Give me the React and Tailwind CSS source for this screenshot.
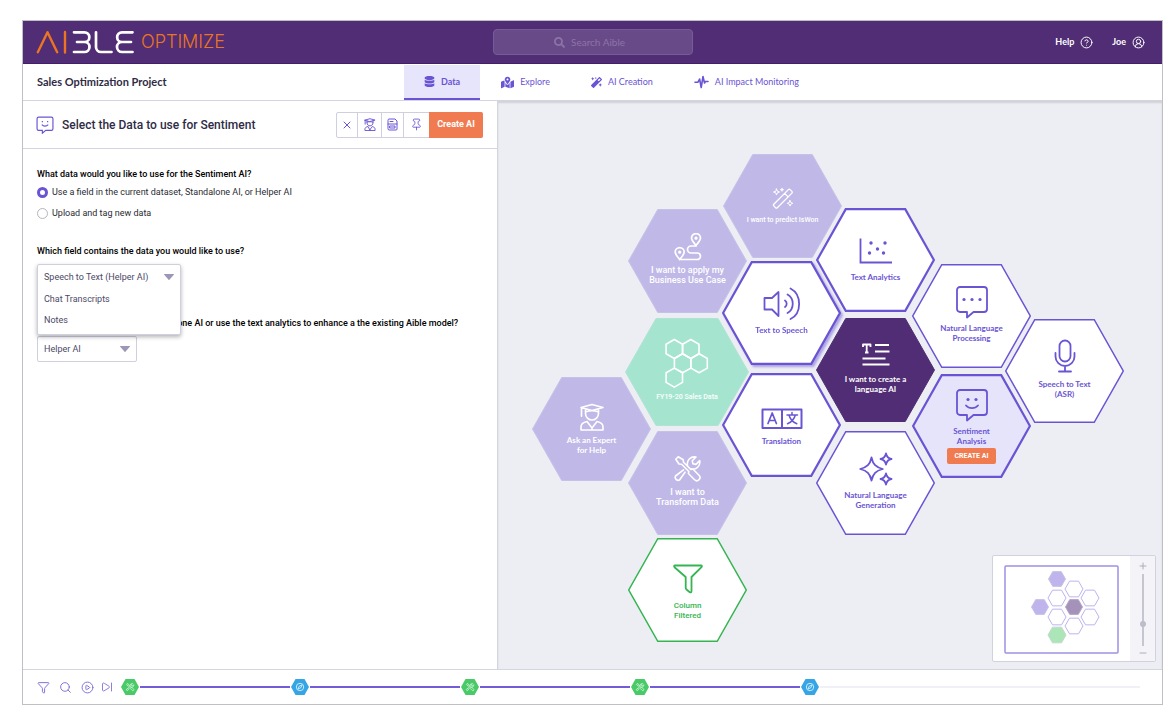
import React from "react";
import { CirclePlay, CircleQuestionMark, CircleUserRound, Funnel, Pin, Search, SkipForward, X } from "lucide-react";
import { FaDatabase, FaMagic, FaMapMarkedAlt, FaSearch } from "react-icons/fa";

function Icon({ w, h, sw = 2, children }) {
  return (
    <svg
      width={w}
      height={h}
      viewBox={`0 0 ${w} ${h}`}
      fill="none"
      stroke="currentColor"
      strokeWidth={sw}
      strokeLinecap="round"
      strokeLinejoin="round"
      aria-hidden="true"
      className="block shrink-0"
    >
      {children}
    </svg>
  );
}

const WandIcon = () => (
  <Icon w={22} h={22} sw={1.3}>
    <path d="M1.8 17.2 16.4 2.6a1.2 1.2 0 0 1 1.7 0l1.8 1.8a1.2 1.2 0 0 1 0 1.7L5.3 20.7a1.2 1.2 0 0 1-1.7 0l-1.8-1.8a1.2 1.2 0 0 1 0-1.7zM12.6 6.4l3.5 3.5" />
    <path d="M4.5 2l.8 2.2 2.2.8-2.2.8-.8 2.2-.8-2.2L1.500 5l2.200-.8zM18 13.500l.8 2 2 .8-2 .8-.8 2-.8-2-2-.8 2-.8z" strokeWidth="1" />
    <path d="M10 1.500v2.400M8.800 2.700h2.400" />
  </Icon>
);

const RouteIcon = () => (
  <Icon w={28} h={28} sw={1.7}>
    <path d="M22 12.500c-2.500-3-4.500-5.200-4.500-7.400a4.500 4.500 0 0 1 9 0c0 2.200-2 4.400-4.500 7.400zM5.700 26.500c-2.500-3-4.500-5.200-4.500-7.400a4.500 4.500 0 0 1 9 0c0 2.200-2 4.400-4.500 7.400z" />
    <path d="M5.700 26.500h17.500a3.200 3.200 0 0 0 0-6.500H17a3.500 3.500 0 0 1 0-7h5" />
    <circle cx="22" cy="5.200" r=".8" />
    <circle cx="5.700" cy="19.200" r=".8" />
  </Icon>
);

const ScatterIcon = () => (
  <Icon w={33} h={26} sw={1.8}>
    <path d="M1.500 1.500v23h31" strokeLinecap="square" strokeLinejoin="miter" />
    <g fill="currentColor" stroke="none">
      <circle cx="12" cy="5" r="1.700" />
      <circle cx="26" cy="5" r="1.700" />
      <circle cx="18.500" cy="11" r="1.700" />
      <circle cx="10.500" cy="15" r="1.700" />
      <circle cx="24.500" cy="15" r="1.700" />
    </g>
  </Icon>
);

const SpeakerIcon = () => (
  <Icon w={38} h={34} sw={1.8}>
    <path d="M1.500 11h7.500L15.500 5v24L9 22.500H1.500z" />
    <path d="M22 13.500a4 4 0 0 1 0 6.500M24.500 7.500c7 4 7 14.500 0 18.500M27.500 1.500c11.500 6 11.500 25 0 30.500" />
  </Icon>
);

function BubbleIcon({ children }) {
  return (
    <Icon w={34} h={34} sw={1.800}>
      <path d="M5 2h24a3 3 0 0 1 3 3v19a3 3 0 0 1-3 3H18.500L12 32.500V27H5a3 3 0 0 1-3-3V5a3 3 0 0 1 3-3z" />
      {children}
    </Icon>
  );
}

const ChatIcon = () => (
  <BubbleIcon>
    <g fill="currentColor" stroke="none">
      <circle cx="9" cy="14.500" r="1.600" />
      <circle cx="17" cy="14.500" r="1.600" />
      <circle cx="25" cy="14.500" r="1.600" />
    </g>
  </BubbleIcon>
);

const SmileIcon = () => (
  <BubbleIcon>
    <g fill="currentColor" stroke="none">
      <circle cx="13" cy="11.500" r="1.600" />
      <circle cx="21" cy="11.500" r="1.600" />
    </g>
    <path d="M11 17.500c3 3.500 9 3.500 12 0" />
  </BubbleIcon>
);

const MicIcon = () => (
  <Icon w={22} h={34} sw={1.800}>
    <rect x="5.500" y="1.500" width="11" height="21" rx="5.500" />
    <path d="M1.500 14v3.500a9.500 9.500 0 0 0 19 0V14M11 27v5.500M5 32.500h12" />
  </Icon>
);

const ArticleIcon = () => (
  <Icon w={30} h={24} sw={1.800}>
    <path d="M2 5V2.500h7.500V5M5.700 2.500v8M4 10.500h3.500M14 3h14M14 9.500h14.500M1.500 16.500h23M1.500 22.500h27" strokeLinecap="butt" />
  </Icon>
);

const TranslateIcon = () => (
  <Icon w={42} h={22} sw={1.700}>
    <path d="M1.500 1.500h39v18.500h-39zM21 1.500V20" strokeWidth="2" />
    <path d="M7 15.500 11.200 5l4.200 10.500M8.500 12.500h5.500" />
    <path d="M26 7h10.500M31 4.500V7M34.300 7c-1 4.200-4.300 7.300-7.800 8.800M28 7c1 4.200 4.300 7.300 7.800 8.800" strokeWidth="1.500" />
  </Icon>
);

const SparklesIcon = () => (
  <Icon w={34} h={34} sw={1.800}>
    <path d="M12.500 5.500c1.500 7 4.300 9.800 11.300 11.500-7 1.700-9.800 4.500-11.300 11.500C11 21.500 8.200 18.700 1.200 17c7-1.700 9.800-4.500 11.300-11.500z" />
    <path d="M27 1.500c.7 3.500 2 4.800 5.500 5.500-3.500.7-4.800 2-5.500 5.500-.7-3.500-2-4.800-5.500-5.500 3.500-.7 4.800-2 5.500-5.500zM27 21.500c.7 3.500 2 4.800 5.500 5.500-3.500.7-4.800 2-5.500 5.500-.7-3.500-2-4.800-5.500-5.500 3.500-.7 4.800-2 5.500-5.500z" />
  </Icon>
);

const cells = [
  [9.3, 11],
  [25.8, 11],
  [17.6, 25.3],
  [34.1, 25.3],
  [9.3, 39.6],
];

const HiveIcon = () => (
  <Icon w={44} h={50} sw={1.600}>
    {cells.map(([x, y]) => (
      <polygon
        key={`${x}-${y}`}
        points={`${x},${y - 9.5} ${x + 8.2},${y - 4.8} ${x + 8.2},${y + 4.8} ${x},${y + 9.5} ${x - 8.2},${y + 4.8} ${x - 8.2},${y - 4.8}`}
      />
    ))}
  </Icon>
);

const ExpertIcon = ({ w = 26, h = 28, sw = 1.600 }) => (
  <svg width={w} height={h} viewBox="0 0 26 28" fill="none" stroke="currentColor" strokeWidth={sw} strokeLinecap="round" strokeLinejoin="round" aria-hidden="true" className="shrink-0">
    <path d="M2 4.500 13 1.500l11 3-11 3zM6.500 6v4.500c0 3.500 3 6.500 6.500 6.500s6.500-3 6.500-6.500V6M6.500 9c4-1.500 9-1.500 13 0M2.500 4.800v8.500" />
    <path d="M8 18.500c-3.500.7-6 2.500-6 5.500v3h22v-3c0-3-2.500-4.800-6-5.500L13 25zM13 25v2" />
  </svg>
);

const ToolsPath = () => (
  <>
    <path d="M1.800 4.200 4.200 1.800l5 3 .3 2.400 7.300 7.200 2-.4 6.200 6.300a3 3 0 0 1-4.400 4.400l-6.200-6.200.4-2-7.200-7.300-2.600-.2z" />
    <path d="M11 17.200 5.500 25a3 3 0 0 1-4-4l8-6.200M13.500 10.500c-1-5 3-9.500 8.500-8.500l-3.700 3.800.6 3 3 .6 3.800-3.800c1 5.500-3.500 9.500-8.500 8.500" />
  </>
);

const ToolsIcon = () => (
  <Icon w={28} h={28} sw={1.600}>
    <ToolsPath />
  </Icon>
);

const FunnelIcon = () => (
  <Icon w={32} h={32} sw={1.800}>
    <path d="M3 2.500h26c1 0 1.200 1 .5 1.700L19.500 14v14c0 1.500-1 1.700-2 1l-3-2.500c-.6-.5-.8-1-.8-1.700V14L2.500 4.200C1.800 3.500 2 2.500 3 2.500z" />
  </Icon>
);

const PulseIcon = () => (
  <Icon w={15} h={14} sw={1.600}>
    <path d="M1 7.200h3L5.600 4 7.200 12.500 9 1.500l1.500 6.500.8-1.500H14" />
  </Icon>
);

const DocIcon = () => (
  <Icon w={11} h={13} sw={1}>
    <path d="M1 2a1 1 0 0 1 1-1h6l2 2v8a1 1 0 0 1-1 1H2a1 1 0 0 1-1-1zM1 6h9M3 3.500h3M3 8h5v2H3z" />
  </Icon>
);

const PURPLE = "#6a54d4";

function Hex({ w, h, fill, stroke, sw }) {
  const i = sw / 2;
  return (
    <svg className="absolute inset-0" width={w} height={h} aria-hidden="true">
      <polygon
        points={`${w / 4},${i} ${(w * 3) / 4},${i} ${w - i},${h / 2} ${(w * 3) / 4},${h - i} ${w / 4},${h - i} ${i},${h / 2}`}
        fill={fill}
        stroke={stroke}
        strokeWidth={sw}
      />
    </svg>
  );
}

const lilac = { fill: "#c0b9e8", stroke: "#c6c1e8", sw: 1 };
const open = { fill: "#ffffff", stroke: PURPLE, sw: 1.500 };
const bold = { fill: "#ffffff", stroke: PURPLE, sw: 2.200 };

const nodes = [
  { pos: "left-[225px] top-[53px]", look: lilac, fit: "gap-1.5", tone: "text-white font-[Roboto] font-medium text-[7px]", icon: <WandIcon />, lines: ["I want to predict IsWon"] },
  { pos: "left-[130px] top-[108px]", look: lilac, fit: "gap-1 pb-1", tone: "text-white font-[Roboto] font-medium text-[9px]", icon: <RouteIcon />, lines: ["I want to apply my", "Business Use Case"] },
  { pos: "left-[318px] top-[107px]", look: bold, fit: "gap-2", tone: "text-[#6a54d4] font-[Lato] font-bold text-[8px]", icon: <ScatterIcon />, lines: ["Text Analytics"] },
  { pos: "left-[224px] top-[160px] drop-shadow-[2px_2px_1px_rgba(106,84,212,0.5)]", look: bold, fit: "gap-1 pb-1", tone: "text-[#6a54d4] font-[Lato] font-bold text-[8px]", icon: <SpeakerIcon />, lines: ["Text to Speech"] },
  { pos: "left-[414px] top-[163px]", look: open, fit: "gap-1 pb-1", tone: "text-[#6a54d4] font-[Lato] font-bold text-[8px]", icon: <ChatIcon />, lines: ["Natural Language", "Processing"] },
  { pos: "left-[507px] top-[218px]", look: open, fit: "gap-1.5 pb-1", tone: "text-[#6a54d4] font-[Lato] font-bold text-[8px]", icon: <MicIcon />, lines: ["Speech to Text", "(ASR)"] },
  { pos: "left-[318px] top-[217px]", look: { fill: "#502d74", stroke: "#502d74", sw: 1 }, fit: "gap-2 pb-1", tone: "text-white font-[Lato] font-bold text-[8px]", icon: <ArticleIcon />, lines: ["I want to create a", "language AI"] },
  { pos: "left-[414px] top-[273px]", look: { fill: "#e5e4fb", stroke: PURPLE, sw: 2.200 }, fit: "gap-1", tone: "text-[#6a54d4] font-[Lato] font-bold text-[8px]", icon: <SmileIcon />, lines: ["Sentiment", "Analysis"], action: "CREATE AI" },
  { pos: "left-[224px] top-[272px]", look: bold, fit: "gap-1.5 pt-1", tone: "text-[#6a54d4] font-[Lato] font-bold text-[8px]", icon: <TranslateIcon />, lines: ["Translation"] },
  { pos: "left-[318px] top-[330px]", look: open, fit: "gap-1 pb-1", tone: "text-[#6a54d4] font-[Lato] font-bold text-[8px]", icon: <SparklesIcon />, lines: ["Natural Language", "Generation"] },
  { pos: "left-[127px] top-[217px]", big: true, look: { fill: "#a5e5d0", stroke: "#b0e3d4", sw: 1 }, fit: "gap-1 pb-1", tone: "text-white font-[Roboto] font-medium text-[7px]", icon: <HiveIcon />, lines: ["FY19-20 Sales Data"] },
  { pos: "left-[34px] top-[276px]", look: lilac, fit: "gap-1", tone: "text-white font-[Lato] font-bold text-[8px]", icon: <ExpertIcon />, lines: ["Ask an Expert", "for Help"] },
  { pos: "left-[130px] top-[330px]", look: lilac, fit: "gap-1 pb-1", tone: "text-white font-[Roboto] font-medium text-[9px]", icon: <ToolsIcon />, lines: ["I want to", "Transform Data"] },
  { pos: "left-[130px] top-[437px]", look: { fill: "#ffffff", stroke: "#35b552", sw: 1.500 }, fit: "gap-1.5 pt-1", tone: "text-[#35b552] font-[Roboto] font-medium text-[8px]", icon: <FunnelIcon />, lines: ["Column", "Filtered"] },
];

function Node({ node }) {
  const size = node.big ? "h-[108px] w-[124px]" : "h-[104px] w-[119px]";
  return (
    <div className={`absolute ${node.pos} ${size}`}>
      <Hex w={node.big ? 124 : 119} h={node.big ? 108 : 104} {...node.look} />
      <div className={`relative flex h-full flex-col items-center justify-center text-center leading-[10px] ${node.fit} ${node.tone}`}>
        {node.icon}
        <div>
          {node.lines.map((line) => (
            <div key={line} className="whitespace-nowrap">{line}</div>
          ))}
          {node.action && (
            <button type="button" className="mt-0.5 block h-4 w-[49px] rounded-xs bg-[#f07b51] font-[Roboto] text-[7px] font-bold text-white">
              {node.action}
            </button>
          )}
        </div>
      </div>
    </div>
  );
}

function MiniHex({ x, y, fill = "#fff", stroke = "#beb3ee", r = 9 }) {
  const h = r * 0.870;
  return (
    <polygon
      points={`${x - r},${y} ${x - r / 2},${y - h} ${x + r / 2},${y - h} ${x + r},${y} ${x + r / 2},${y + h} ${x - r / 2},${y + h}`}
      fill={fill}
      stroke={stroke}
    />
  );
}

function MiniMap() {
  return (
    <div className="absolute right-1.5 bottom-[7px] flex h-[107px] w-[164px] overflow-hidden rounded-xs border border-[#d2d2de] bg-white">
      <div className="flex flex-1 items-center justify-center pt-0.5">
        <svg width="115" height="89" aria-label="Map overview">
          <rect x="1" y="1" width="113" height="87" rx="1" fill="#fff" stroke="#9f91e4" strokeWidth="1.500" />
          <MiniHex x={53} y={14} r={8.500} fill="#bfb4ec" stroke="#c9c3e6" />
          <MiniHex x={36} y={42} r={8.500} fill="#bfb4ec" stroke="#c9c3e6" />
          <MiniHex x={70} y={24} />
          <MiniHex x={53} y={33} />
          <MiniHex x={86} y={33} />
          <MiniHex x={53} y={52} />
          <MiniHex x={86} y={52} />
          <MiniHex x={70} y={61} />
          <MiniHex x={70} y={42} r={8.500} fill="#a592ba" stroke="#b5a8c6" />
          <MiniHex x={53} y={70} fill="#abe5b8" stroke="#c3d9cb" />
        </svg>
      </div>
      <div className="flex w-[25px] flex-col items-center justify-between bg-[#f3f3f8] pt-1.5 pb-1 text-[#aeaebd]">
        <button type="button" aria-label="Zoom in">
          <Icon w={8} h={8} sw={1}><path d="M4 1v6M1 4h6" /></Icon>
        </button>
        <input
          type="range"
          aria-label="Zoom level"
          defaultValue="28"
          className="h-[72px] w-2 appearance-none bg-transparent [direction:rtl] [writing-mode:vertical-lr] [&::-webkit-slider-runnable-track]:w-0.5 [&::-webkit-slider-runnable-track]:bg-[#c6c6d2] [&::-webkit-slider-thumb]:-ml-0.5 [&::-webkit-slider-thumb]:size-1.5 [&::-webkit-slider-thumb]:appearance-none [&::-webkit-slider-thumb]:rounded-full [&::-webkit-slider-thumb]:bg-[#bdbdca]"
        />
        <button type="button" aria-label="Zoom out">
          <Icon w={8} h={8} sw={1}><path d="M1 4h6" /></Icon>
        </button>
      </div>
    </div>
  );
}

function Step({ kind }) {
  const tools = kind === "tools";
  return (
    <svg width="18" height="16" viewBox="0 0 18 16" role="img" aria-label={tools ? "Transform step" : "Explore step"} className="shrink-0">
      <polygon points="4.500,0 13.500,0 18,8 13.500,16 4.500,16 0,8" fill={tools ? "#49c967" : "#36a5e6"} />
      {tools ? (
        <g transform="translate(5 4) scale(.3)" fill="none" stroke="#d9f8df" strokeWidth="2.600">
          <ToolsPath />
        </g>
      ) : (
        <g fill="none" stroke="#d5effc" strokeWidth="0.900">
          <circle cx="9" cy="8" r="3.700" />
          <path d="M11 6l-1.200 2.800L7 10l1.200-2.800z" />
        </g>
      )}
    </svg>
  );
}

const Caret = () => (
  <svg width="10" height="6" viewBox="0 0 10 6" aria-hidden="true" className="pointer-events-none absolute right-1.5 top-1/2 -translate-y-1/2">
    <path d="M.5 0h9a.4.4 0 0 1 .3.700L5.400 5.700a.5.5 0 0 1-.8 0L.2.700A.4.4 0 0 1 .5 0z" fill="#9b97b8" />
  </svg>
);

const Logo = () => (
  <svg width="98" height="24" viewBox="0 0 98 24" fill="none" strokeLinecap="round" strokeLinejoin="round" role="img" aria-label="Aible">
    <path d="M1.800 22.200 11.500 2.200l9.700 20M29 2v20.500" stroke="#ec7422" strokeWidth="2.400" />
    <path d="M38 2.300h10.500a4.800 4.800 0 0 1 0 9.700H41M48.500 12a5 5 0 0 1 0 10H38M60 2.300V17a5 5 0 0 0 5 5h10.500M96.500 2.300H86a4.800 4.800 0 0 0 0 9.700h9M86 12a5 5 0 0 0 0 10h10.500" stroke="#fff" strokeWidth="2.700" />
  </svg>
);

const tabs = [
  { label: "Data", icon: <FaDatabase size={11} />, active: true },
  { label: "Explore", icon: <FaMapMarkedAlt size={13} /> },
  { label: "AI Creation", icon: <FaMagic size={11} /> },
  { label: "AI Impact Monitoring", icon: <PulseIcon /> },
];

const radio =
  "size-[11px] appearance-none rounded-full border border-[#b5b5bd] bg-white checked:border-[3px] checked:border-[#6a54d4]";

export default function App() {
  return (
    <div className="flex min-h-screen flex-col bg-white pt-5 pr-[9px] pb-[19px] pl-[22px] font-[Roboto,sans-serif] text-[#2f2b45]">
      <div className="flex flex-1 flex-col border border-[#bfbfc6]">
        <header className="grid h-[43px] grid-cols-[1fr_200px_1fr] items-center border-b border-[#431e6c] bg-[#502d74] text-white">
          <div className="flex items-center gap-[7px] pl-[13px]">
            <Logo />
            <span className="font-[Inter] text-[18px] leading-6 font-light text-[#ec7422]">OPTIMIZE</span>
          </div>
          <label className="flex h-[26px] items-center justify-center gap-1.5 rounded border border-[#765b94] bg-[#694a88] text-[#8c74a8]">
            <FaSearch size={11} />
            <input type="search" aria-label="Search Aible" placeholder="Search Aible" className="w-[60px] appearance-none bg-transparent font-[Lato] text-[10px] outline-none placeholder:text-[#8c74a8] [&::-webkit-search-cancel-button]:hidden" />
          </label>
          <div className="flex items-center justify-end gap-[19px] pr-[17px] font-[Lato] text-[9px] font-bold">
            <a href="#help" className="flex items-center gap-1.5">Help <CircleQuestionMark size={13} strokeWidth={1.8} /></a>
            <a href="#account" className="flex items-center gap-1.5">Joe <CircleUserRound size={13} strokeWidth={1.8} /></a>
          </div>
        </header>

        <nav className="flex h-[37px] items-stretch gap-px border-b border-[#d5d5e0]">
          <h1 className="flex w-[380px] items-center pl-3.5 font-[Lato] text-[11px] font-bold">Sales Optimization Project</h1>
          {tabs.map((tab) => (
            <button
              key={tab.label}
              type="button"
              className={
                tab.active
                  ? "mt-px flex items-center gap-1.5 border-b-2 border-[#6a54d4] bg-[#e6e5fb] px-5 font-[Lato] text-[9px] font-bold text-[#6a54d4]"
                  : "flex items-center gap-1.5 px-5 font-[Lato] text-[9px] text-[#6a54d4]"
              }
            >
              {tab.icon}
              {tab.label}
            </button>
          ))}
        </nav>

        <main className="flex min-h-[568px] flex-1">
          <section className="w-[475px] shrink-0 border-r border-[#d5d5e0]">
            <div className="flex h-12 items-center border-b border-[#d5d5e0] pr-3.5 pl-[13px]">
              <svg width="18" height="18" viewBox="0 0 34 34" fill="none" stroke={PURPLE} strokeWidth="2.200" aria-hidden="true">
                <path d="M5 2h24a3 3 0 0 1 3 3v19a3 3 0 0 1-3 3H18.500L12 32.500V27H5a3 3 0 0 1-3-3V5a3 3 0 0 1 3-3z" />
                <path d="M11 16.500c3 3.500 9 3.500 12 0M12 9.500v2.500M22 9.500v2.500" />
              </svg>
              <h2 className="flex-1 pl-2 text-xs font-medium">Select the Data to use for Sentiment</h2>
              <div className="flex h-[26px] items-stretch rounded-xs border border-[#d0cfe0] text-[#6a54d4]">
                <button type="button" aria-label="Close" className="flex w-5 items-center justify-center"><X size={12} strokeWidth={2} /></button>
                <button type="button" aria-label="Ask an expert" className="flex w-6 items-center justify-center border-l border-[#d0cfe0]"><ExpertIcon w={12} h={13} sw={2} /></button>
                <button type="button" aria-label="Notes" className="flex w-[22px] items-center justify-center border-l border-[#d0cfe0]"><DocIcon /></button>
                <button type="button" aria-label="Pin" className="flex w-[26px] items-center justify-center border-l border-[#d0cfe0]"><Pin size={13} strokeWidth={1.6} /></button>
                <button type="button" className="-my-px -mr-px w-[54px] rounded-r-xs bg-[#f07b51] text-[9px] font-bold text-white">Create AI</button>
              </div>
            </div>

            <form className="px-3.5 pt-[19px] text-[9px] leading-3 text-[#2b2b33]">
              <fieldset>
                <legend className="font-medium text-black">What data would you like to use for the Sentiment AI?</legend>
                <label className="mt-1.5 flex items-center gap-1">
                  <input type="radio" name="source" defaultChecked className={radio} />
                  Use a field in the current dataset, Standalone AI, or Helper AI
                </label>
                <label className="mt-[9px] flex items-center gap-1">
                  <input type="radio" name="source" className={radio} />
                  Upload and tag new data
                </label>
              </fieldset>

              <div className="relative mt-[26px]">
                <label htmlFor="field" className="font-medium text-black">Which field contains the data you would like to use?</label>
                <div className="absolute top-[19px] left-0 z-10 w-36 rounded-xs border border-[#d0cfe0] bg-white pb-1 text-[#4c4966] shadow-[0_2px_4px_rgba(0,0,0,0.3)]">
                  <div className="relative">
                    <select id="field" className="h-[23px] w-full appearance-none bg-transparent px-1.5">
                      <option>Speech to Text (Helper AI)</option>
                      <option>Chat Transcripts</option>
                      <option>Notes</option>
                    </select>
                    <Caret />
                  </div>
                  <button type="button" className="flex h-[21px] w-full items-center px-1.5">Chat Transcripts</button>
                  <button type="button" className="flex h-[21px] w-full items-center px-1.5">Notes</button>
                </div>
              </div>

              <div className="mt-[60px]">
                <label htmlFor="mode" className="block whitespace-nowrap font-medium text-black">
                  Do you want to build a new Standalone AI or use the text analytics to enhance a the existing Aible model?
                </label>
                <div className="relative mt-[7px] w-[100px] rounded-xs border border-[#d0cfe0] text-[#4c4966]">
                  <select id="mode" className="h-6 w-full appearance-none bg-transparent px-1.5">
                    <option>Helper AI</option>
                    <option>Standalone AI</option>
                  </select>
                  <Caret />
                </div>
              </div>
            </form>
          </section>

          <section className="relative min-w-[640px] flex-1 overflow-hidden bg-[#edeef4] shadow-[inset_0_2px_2px_rgba(0,0,0,0.12)]">
            {nodes.map((node) => (
              <Node key={node.lines.join(" ")} node={node} />
            ))}
            <MiniMap />
          </section>
        </main>

        <footer className="flex h-[35px] items-center border-t border-[#d5d5e0] pr-[22px] pl-3.5">
          <div className="flex items-center gap-[9px] text-[#8170d8]">
            <button type="button" aria-label="Filter"><Funnel size={13} strokeWidth={1.8} /></button>
            <button type="button" aria-label="Search"><Search size={13} strokeWidth={1.8} /></button>
            <button type="button" aria-label="Play"><CirclePlay size={13} strokeWidth={1.8} /></button>
            <button type="button" aria-label="Skip to end" className="-ml-0.5"><SkipForward size={12} strokeWidth={1.8} /></button>
          </div>
          <div className="ml-2 flex flex-1 items-center gap-px">
            <Step kind="tools" />
            <div className="h-0.5 flex-[152] bg-[#745bd8]" />
            <Step kind="compass" />
            <div className="h-0.5 flex-[152] bg-[#745bd8]" />
            <Step kind="tools" />
            <div className="h-0.5 flex-[152] bg-[#745bd8]" />
            <Step kind="tools" />
            <div className="h-0.5 flex-[152] bg-[#745bd8]" />
            <Step kind="compass" />
            <div className="h-0.5 flex-[324] bg-[#f0f0f6]" />
          </div>
        </footer>
      </div>
    </div>
  );
}
